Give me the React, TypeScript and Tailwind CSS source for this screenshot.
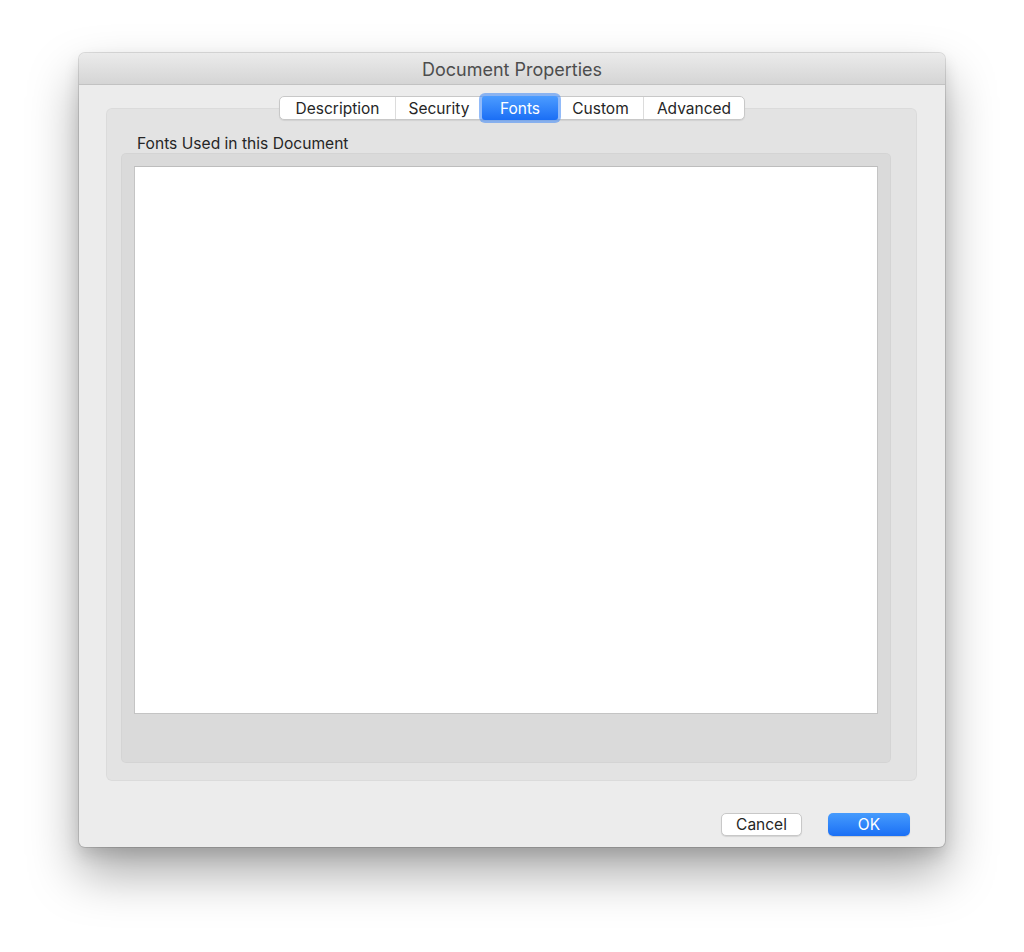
import React from "react";

const tabs = [
  { label: "Description", w: "w-[115px]" },
  { label: "Security", w: "w-[87px]" },
  { label: "Fonts", w: "w-[76px]", active: true },
  { label: "Custom", w: "w-[85px]" },
  { label: "Advanced", w: "w-[101px]" },
];

export default function App() {
  return (
    <div className="min-h-[952px] w-[1024px] bg-white pt-[53px] pl-[79px] font-['Inter','Liberation_Sans',sans-serif]">
      <div className="flex h-[794px] w-[866px] flex-col overflow-hidden rounded-[6px] bg-[#ececec] shadow-[0_0_0_1px_rgba(0,0,0,0.12),0_26px_50px_rgba(0,0,0,0.34),0_8px_16px_rgba(0,0,0,0.12)]">
        {/* Title bar */}
        <div className="flex h-[32px] shrink-0 items-center justify-center border-b border-[#c2c2c2] bg-gradient-to-b from-[#ebebeb] to-[#d5d5d5] pt-[2px] text-[18px] text-[#4d4d4d]">
          Document Properties
        </div>

        {/* Body */}
        <div className="flex flex-1 flex-col px-[27px] pt-[11px]">
          {/* Tabs */}
          <div className="relative z-10 flex justify-center">
            <div className="flex h-[24px] rounded-[5px] border border-[#c8c8c8] bg-white shadow-[0_1px_1px_rgba(0,0,0,0.08)]">
              {tabs.map((t, i) =>
                t.active ? (
                  <div key={t.label} className={`relative ${t.w} -my-px`}>
                    <div className="absolute -inset-[3px] rounded-[6px] bg-[#4a8df5]/60" />
                    <div className="absolute inset-0 flex items-center justify-center rounded-[3px] bg-gradient-to-b from-[#4c9cff] to-[#1a6ef5] pt-px text-[15.5px] text-white">
                      {t.label}
                    </div>
                  </div>
                ) : (
                  <div
                    key={t.label}
                    className={`flex ${t.w} items-center justify-center pt-px text-[15.5px] text-[#262626] ${
                      i > 0 && !tabs[i - 1].active ? "border-l border-[#dcdcdc]" : ""
                    }`}
                  >
                    {t.label}
                  </div>
                )
              )}
            </div>
          </div>

          {/* Tab box */}
          <div className="-mt-[12px] ml-0 mr-px flex h-[673px] flex-col rounded-[6px] bg-[#e3e3e3] shadow-[inset_0_0_0_1px_rgba(0,0,0,0.03)] pt-[27px] pl-[15px] pr-[26px] pb-[18px]">
            <div className="h-[16px] pl-[16px] text-[15.6px] leading-[17px] text-[#262626]">
              Fonts Used in this Document
            </div>
            <div className="mt-[2px] flex flex-1 flex-col rounded-[5px] bg-[#dadada] p-[13px] pb-[49px] shadow-[inset_0_0_0_1px_rgba(0,0,0,0.025)]">
              <div className="flex-1 border border-[#c4c4c4] border-t-[#bdbdbd] bg-white" />
            </div>
          </div>

          {/* Buttons */}
          <div className="mt-[32px] flex justify-end gap-[26px] pr-[8px]">
            <button className="flex h-[23px] w-[81px] items-center justify-center rounded-[5px] border border-[#c8c8c8] bg-white pt-px text-[15.5px] text-[#262626] shadow-[0_1px_1px_rgba(0,0,0,0.1)]">
              Cancel
            </button>
            <button className="flex h-[23px] w-[82px] items-center justify-center rounded-[5px] bg-gradient-to-b from-[#469bfd] to-[#1a6ff5] pt-px text-[15.5px] text-white shadow-[0_1px_1px_rgba(0,0,0,0.15)]">
              OK
            </button>
          </div>
        </div>
      </div>
    </div>
  );
}
